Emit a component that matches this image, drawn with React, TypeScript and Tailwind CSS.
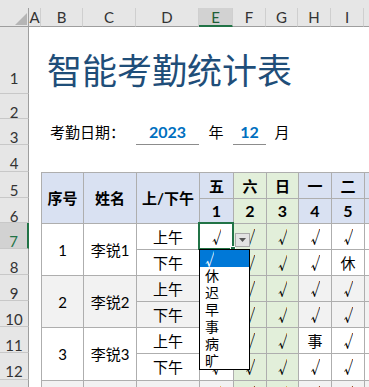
import React from "react";

const TC = "flex items-center justify-center border-l border-t border-[#aeaeae] text-[15px] leading-[18px] whitespace-nowrap overflow-hidden";

function Mark({ v }: { v: string }) {
  if (v !== "√") return <span className="font-['Noto_Sans_CJK_SC',sans-serif]">{v}</span>;
  return (
    <span className="inline-block w-[9px] h-[16px] overflow-hidden leading-[16px] text-[16px] font-['Noto_Sans_CJK_SC',sans-serif]">
      <span className="inline-block translate-y-[-1px]">√</span>
    </span>
  );
}

function RH({ n, sel, tall }: { n: number; sel?: boolean; tall?: boolean }) {
  return (
    <div
      className={`flex justify-center border-b border-b-[#c8c8c8] text-[15px] leading-[18px] ${
        sel
          ? "bg-[#d2d2d2] text-[#217346] border-r-2 border-r-[#217346]"
          : "bg-[#e6e6e6] text-[#333333] border-r border-r-[#9e9e9e]"
      } ${tall ? "pt-[42px]" : "pt-[9px]"}`}
    >
      {n}
    </div>
  );
}

function CH({ l, sel }: { l: string; sel?: boolean }) {
  return (
    <div
      className={`flex items-center justify-center border-r border-r-[#cfcfcf] text-[15px] leading-[18px] ${
        sel
          ? "bg-[#d2d2d2] text-[#1e5e36] border-b-2 border-b-[#217346]"
          : "bg-[#e6e6e6] text-[#333333] border-b border-b-[#9e9e9e]"
      }`}
    >
      {l}
    </div>
  );
}

type Person = { n: string; name: string; am: string[]; pm: string[]; gray: boolean };

const ALL = ["√", "√", "√", "√", "√", "√"];
const persons: Person[] = [
  { n: "1", name: "李锐1", am: ALL, pm: ["√", "√", "√", "√", "休", "√"], gray: false },
  { n: "2", name: "李锐2", am: ALL, pm: ALL, gray: true },
  { n: "3", name: "李锐3", am: ["√", "√", "√", "事", "√", "√"], pm: ALL, gray: false },
  { n: "4", name: "李锐4", am: ALL, pm: ALL, gray: true },
];

function DayCells({ vals, gray }: { vals: string[]; gray: boolean }) {
  return (
    <>
      {vals.map((v, i) => {
        const weekend = i === 1 || i === 2;
        const bg = weekend ? "bg-[#e2efda]" : gray ? "bg-[#f2f2f2]" : "bg-white";
        return (
          <div key={i} className={`${TC} ${bg}`}>
            <Mark v={v} />
          </div>
        );
      })}
    </>
  );
}

export default function App() {
  const items = ["√", "休", "迟", "早", "事", "病", "旷"];
  return (
    <div className="relative w-[369px] h-[387px] overflow-hidden bg-white text-black font-['Lato','Noto_Sans_CJK_SC',sans-serif]">
      <div className="h-[8px] bg-[#e6e6e6]" />
      <div className="grid grid-cols-[29px_12px_42px_53px_63px_34px_33px_32px_33px_33px_33px] grid-rows-[19px_67px_25px_26px_27px_26px_25px_26px_26px_26px_26px_26px_27px_26px] auto-rows-[26px]">
        {/* column header row */}
        <div className="relative bg-[#e6e6e6] border-r border-r-[#9e9e9e] border-b border-b-[#9e9e9e]">
          <svg className="absolute left-[15px] top-[5px]" width="12" height="12" viewBox="0 0 12 12">
            <path d="M12 0V12H0Z" fill="#b5b5b5" />
          </svg>
        </div>
        <CH l="A" />
        <CH l="B" />
        <CH l="C" />
        <CH l="D" />
        <CH l="E" sel />
        <CH l="F" />
        <CH l="G" />
        <CH l="H" />
        <CH l="I" />
        <CH l="J" />

        {/* row 1: title */}
        <RH n={1} tall />
        <div />
        <div className="col-span-9 pl-[6px] pt-[24px] text-[35px] leading-[35px] text-[#1f4e79] font-['Noto_Sans_CJK_SC',sans-serif] whitespace-nowrap">
          智能考勤统计表
        </div>

        {/* row 2 */}
        <RH n={2} />
        <div className="col-span-10" />

        {/* row 3 */}
        <RH n={3} />
        <div />
        <div className="col-span-2 flex items-center pl-[9px] text-[15px] font-['Noto_Sans_CJK_SC',sans-serif] whitespace-nowrap">
          考勤日期：
        </div>
        <div className="flex items-center justify-center border-b border-b-[#8c8c8c] text-[16px] font-bold text-[#0070c0]">
          2023
        </div>
        <div className="flex items-center justify-center text-[15px]">年</div>
        <div className="flex items-center justify-center border-b border-b-[#8c8c8c] text-[16px] font-bold text-[#0070c0]">
          12
        </div>
        <div className="flex items-center justify-center text-[15px]">月</div>
        <div className="col-span-3" />

        {/* row 4 */}
        <RH n={4} />
        <div className="col-span-10" />

        {/* row 5 */}
        <RH n={5} />
        <div />
        <div className={`${TC} row-span-2 bg-[#d9e1f2] font-bold`}>序号</div>
        <div className={`${TC} row-span-2 bg-[#d9e1f2] font-bold`}>姓名</div>
        <div className={`${TC} row-span-2 bg-[#d9e1f2] font-bold`}>上/下午</div>
        <div className={`${TC} bg-[#d9e1f2] font-bold`}>五</div>
        <div className={`${TC} bg-[#e2efda] font-bold`}>六</div>
        <div className={`${TC} bg-[#e2efda] font-bold`}>日</div>
        <div className={`${TC} bg-[#d9e1f2] font-bold`}>一</div>
        <div className={`${TC} bg-[#d9e1f2] font-bold`}>二</div>
        <div className={`${TC} bg-[#d9e1f2] font-bold`}>三</div>

        {/* row 6 */}
        <RH n={6} />
        <div />
        <div className={`${TC} bg-[#d9e1f2] font-bold text-[16px]`}>1</div>
        <div className={`${TC} bg-[#e2efda] font-bold text-[16px]`}>2</div>
        <div className={`${TC} bg-[#e2efda] font-bold text-[16px]`}>3</div>
        <div className={`${TC} bg-[#d9e1f2] font-bold text-[16px]`}>4</div>
        <div className={`${TC} bg-[#d9e1f2] font-bold text-[16px]`}>5</div>
        <div className={`${TC} bg-[#d9e1f2] font-bold text-[16px]`}>6</div>

        {persons.map((p, idx) => {
          const bg = p.gray ? "bg-[#f2f2f2]" : "bg-white";
          const r = 7 + idx * 2;
          return (
            <React.Fragment key={p.n}>
              <RH n={r} sel={r === 7} />
              <div />
              <div className={`${TC} row-span-2 ${bg}`}>{p.n}</div>
              <div className={`${TC} row-span-2 ${bg}`}>{p.name}</div>
              <div className={`${TC} ${bg}`}>上午</div>
              <DayCells vals={p.am} gray={p.gray} />
              <RH n={r + 1} />
              <div />
              <div className={`${TC} ${bg}`}>下午</div>
              <DayCells vals={p.pm} gray={p.gray} />
            </React.Fragment>
          );
        })}
      </div>

      {/* selection of E7 */}
      <div className="absolute left-[198px] top-[222px] w-[36px] h-[28px] border-2 border-[#217346]" />
      <div className="absolute left-[230px] top-[246px] w-[6px] h-[6px] bg-[#217346] border border-white" />

      {/* dropdown button */}
      <div className="absolute left-[235px] top-[233px] w-[15px] h-[14px] bg-[#e3e3e3] border border-[#a9a9a9] flex items-center justify-center">
        <svg width="7" height="4" viewBox="0 0 7 4">
          <path d="M0 0H7L3.5 4Z" fill="#555555" />
        </svg>
      </div>

      {/* dropdown list */}
      <div className="absolute left-[199px] top-[249px] w-[51px] h-[121px] bg-white border border-black flex flex-col">
        {items.map((it, i) => (
          <div
            key={it}
            className={`h-[17px] flex items-center pl-[5px] text-[14px] leading-[17px] font-['Noto_Sans_CJK_SC',sans-serif] ${
              i === 0 ? "bg-[#0078d7] text-white" : "text-black"
            }`}
          >
            <Mark v={it} />
          </div>
        ))}
      </div>
    </div>
  );
}
